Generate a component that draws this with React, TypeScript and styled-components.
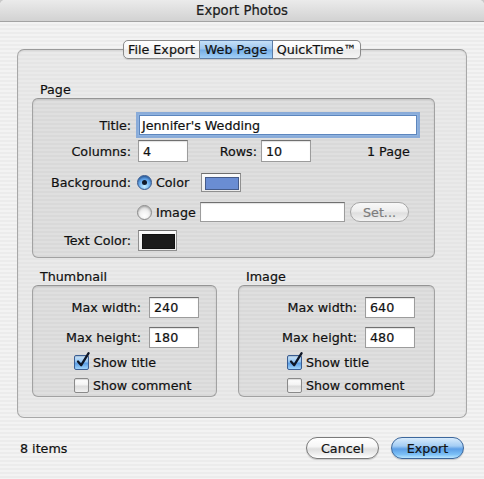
import React from "react";
import styled, { createGlobalStyle, css } from "styled-components";

const FONT = `"DejaVu Sans", "Lucida Grande", Verdana, sans-serif`;

const GlobalStyle = createGlobalStyle`
  html, body { margin: 0; padding: 0; background: #c9c9c9; }
  * { box-sizing: border-box; }
`;

const Window = styled.div`
  width: 484px;
  height: 479px;
  display: flex;
  flex-direction: column;
  font-family: ${FONT};
  font-size: 12.7px;
  color: #101010;
  -webkit-text-stroke: 0.2px #101010;
  border-radius: 5px 5px 0 0;
  overflow: hidden;
  background: repeating-linear-gradient(
    to bottom,
    #ececec 0px,
    #ececec 2px,
    #f3f3f3 2px,
    #f3f3f3 4px
  );
`;

const TitleBar = styled.div`
  height: 22px;
  flex: none;
  display: flex;
  align-items: center;
  justify-content: center;
  font-size: 13.2px;
  color: #1e1e1e;
  background: linear-gradient(to bottom, #ebebeb 0%, #dcdcdc 60%, #d2d2d2 100%);
  border-bottom: 1px solid #a3a3a3;
`;

const Main = styled.div`
  flex: none;
  padding: 18px 17px 0 17px;
  display: flex;
  flex-direction: column;
`;

const TabStrip = styled.div`
  display: flex;
  justify-content: center;
  position: relative;
  z-index: 1;
  height: 19px;
`;

const Tab = styled.div<{ $w: number; $active?: boolean; $first?: boolean; $last?: boolean }>`
  width: ${(p) => p.$w}px;
  height: 19px;
  display: flex;
  align-items: center;
  justify-content: center;
  border: 1px solid #8a8a8a;
  border-left-width: ${(p) => (p.$first ? 1 : 0)}px;
  border-radius: ${(p) => (p.$first ? "5px 0 0 5px" : p.$last ? "0 5px 5px 0" : "0")};
  background: linear-gradient(to bottom, #ffffff 0%, #f7f7f7 48%, #e9e9e9 52%, #f4f4f4 100%);
  box-shadow: 0 1px 1px rgba(0, 0, 0, 0.12);
  color: #121212;
  ${(p) =>
    p.$active &&
    css`
      background: linear-gradient(to bottom, #c6e0f7 0%, #9cc6ef 48%, #74ade6 52%, #a2d0f7 100%);
      border-color: #5f7fa8;
    `}
`;

const TabPanel = styled.div`
  margin-top: -10px;
  width: 450px;
  padding: 32px 31px 20px 14px;
  border: 1px solid #a8a8a8;
  border-top-color: #9a9a9a;
  border-radius: 7px;
  background: repeating-linear-gradient(
    to bottom,
    #e5e5e5 0px,
    #e5e5e5 2px,
    #eaeaea 2px,
    #eaeaea 4px
  );
  box-shadow: inset 0 1px 2px rgba(0, 0, 0, 0.08);
`;

const GroupLabel = styled.div<{ $mt?: number }>`
  height: 16px;
  line-height: 16px;
  padding-left: 8px;
  margin-top: ${(p) => p.$mt ?? 0}px;
`;

const Group = styled.div<{ $pt: number; $pb: number }>`
  border: 1px solid #a2a2a2;
  border-top-color: #959595;
  border-radius: 6px;
  padding: ${(p) => p.$pt}px 0 ${(p) => p.$pb}px 0;
  background: repeating-linear-gradient(
    to bottom,
    #d9d9d9 0px,
    #d9d9d9 2px,
    #dfdfdf 2px,
    #dfdfdf 4px
  );
  box-shadow: inset 0 1px 2px rgba(0, 0, 0, 0.1);
`;

const Row = styled.div<{ $mt?: number; $h?: number }>`
  display: flex;
  align-items: center;
  height: ${(p) => p.$h ?? 22}px;
  margin-top: ${(p) => p.$mt ?? 0}px;
`;

const FieldLabel = styled.div<{ $w: number; $mr?: number }>`
  width: ${(p) => p.$w}px;
  flex: none;
  text-align: right;
  margin-right: ${(p) => p.$mr ?? 7}px;
  white-space: nowrap;
`;

const TextField = styled.div<{ $w: number; $h?: number; $focus?: boolean; $ml?: number }>`
  width: ${(p) => p.$w}px;
  height: ${(p) => p.$h ?? 22}px;
  flex: none;
  margin-left: ${(p) => p.$ml ?? 0}px;
  display: flex;
  align-items: center;
  padding: 0 4px;
  background: #ffffff;
  border: 1px solid #9c9c9c;
  border-top-color: #707070;
  box-shadow: inset 0 1px 1px rgba(0, 0, 0, 0.12);
  white-space: nowrap;
  ${(p) =>
    p.$focus &&
    css`
      padding-left: 2px;
      border-color: #5d86bd;
      box-shadow: 0 0 0 1px #8fb3e0, 0 0 0 3px rgba(110, 155, 215, 0.75);
    `}
`;

const PageCount = styled.div`
  margin-left: 56px;
`;

const RadioOption = styled.div<{ $w: number }>`
  width: ${(p) => p.$w}px;
  flex: none;
  display: flex;
  align-items: center;
  gap: 4px;
  margin-left: -1px;
`;

const Radio = styled.span<{ $on?: boolean }>`
  width: 15px;
  height: 15px;
  flex: none;
  border-radius: 50%;
  position: relative;
  border: 1px solid #8a8a8a;
  -webkit-text-stroke: 0;
  background: radial-gradient(circle at 50% 75%, #ffffff 0%, #f2f2f2 40%, #cfcfcf 100%);
  box-shadow: inset 0 1px 2px rgba(0, 0, 0, 0.25);
  ${(p) =>
    p.$on &&
    css`
      border-color: #34558a;
      background: radial-gradient(circle at 50% 80%, #c5ecff 0%, #6fb2f2 45%, #2f6fc6 100%);
      box-shadow: inset 0 1px 2px rgba(0, 0, 0, 0.35);
      &::after {
        content: "";
        position: absolute;
        left: 4px;
        top: 4px;
        width: 5px;
        height: 5px;
        border-radius: 50%;
        background: #111a2a;
      }
    `}
`;

const ColorWell = styled.div<{ $w: number; $h: number; $color: string }>`
  width: ${(p) => p.$w}px;
  height: ${(p) => p.$h}px;
  flex: none;
  padding: 3px;
  border: 1px solid #8f8f8f;
  border-top-color: #6f6f6f;
  background: linear-gradient(to bottom, #fbfbfb, #ececec);
  &::before {
    content: "";
    display: block;
    width: 100%;
    height: 100%;
    background: ${(p) => p.$color};
    border: 1px solid rgba(0, 0, 0, 0.35);
  }
`;

const Spacer = styled.div<{ $w: number }>`
  width: ${(p) => p.$w}px;
  flex: none;
`;

const PillButton = styled.div<{ $w: number; $h: number; $kind?: "default" | "primary" | "disabled"; $ml?: number }>`
  width: ${(p) => p.$w}px;
  height: ${(p) => p.$h}px;
  flex: none;
  margin-left: ${(p) => p.$ml ?? 0}px;
  border-radius: ${(p) => p.$h / 2}px;
  display: flex;
  align-items: center;
  justify-content: center;
  border: 1px solid #7a7a7a;
  color: #141414;
  background: linear-gradient(
    to bottom,
    #ffffff 0%,
    #f6f6f6 42%,
    #dedede 55%,
    #eeeeee 80%,
    #ffffff 100%
  );
  box-shadow: 0 1px 1px rgba(0, 0, 0, 0.18);
  ${(p) =>
    p.$kind === "primary" &&
    css`
      border-color: #3c679c;
      background: linear-gradient(
        to bottom,
        #d8ebfc 0%,
        #a4cdf4 40%,
        #5d9fe6 55%,
        #7cc0f6 82%,
        #b9e6ff 100%
      );
    `}
  ${(p) =>
    p.$kind === "disabled" &&
    css`
      color: #7d7d7d;
      -webkit-text-stroke: 0.2px #7d7d7d;
      border-color: #a5a5a5;
      box-shadow: none;
      background: linear-gradient(
        to bottom,
        #f8f8f8 0%,
        #eeeeee 45%,
        #dfdfdf 55%,
        #e9e9e9 80%,
        #f3f3f3 100%
      );
    `}
`;

const SubGroups = styled.div`
  display: grid;
  grid-template-columns: 185px 197px;
  column-gap: 21px;
  margin-top: 11px;
`;

const CheckRow = styled.div<{ $ml: number; $mt: number }>`
  display: flex;
  align-items: center;
  gap: 4px;
  height: 16px;
  margin-top: ${(p) => p.$mt}px;
  margin-left: ${(p) => p.$ml}px;
`;

const CheckBoxBox = styled.span<{ $on?: boolean }>`
  width: 15px;
  height: 15px;
  flex: none;
  position: relative;
  border-radius: 2px;
  border: 1px solid #8a8a8a;
  -webkit-text-stroke: 0;
  background: linear-gradient(to bottom, #ffffff 0%, #f3f3f3 45%, #dcdcdc 55%, #f1f1f1 100%);
  box-shadow: inset 0 1px 1px rgba(0, 0, 0, 0.15);
  ${(p) =>
    p.$on &&
    css`
      border-color: #3a5d92;
      background: linear-gradient(to bottom, #cbe5fb 0%, #93c3f0 45%, #5a9de6 55%, #9fd3fa 100%);
    `}
  svg {
    position: absolute;
    left: 1px;
    top: -4px;
    overflow: visible;
  }
`;

const BottomBar = styled.div`
  flex: 1;
  display: flex;
  align-items: center;
  padding: 0 20px 1px 20px;
`;

const ItemsCount = styled.div`
  flex: 1;
`;

const CheckBox = ({ on }: { on?: boolean }) => (
  <CheckBoxBox $on={on}>
    {on && (
      <svg width="14" height="16" viewBox="0 0 14 16">
        <path
          d="M2 9.5 L5.2 13.2 L12.6 1.2"
          fill="none"
          stroke="#0e1626"
          strokeWidth="2.3"
          strokeLinecap="round"
          strokeLinejoin="round"
        />
      </svg>
    )}
  </CheckBoxBox>
);

type SizeGroupProps = {
  labelW: number;
  checkMl: number;
  width: string;
  height: string;
};

const SizeGroup = ({ labelW, checkMl, width, height }: SizeGroupProps) => (
  <Group $pt={11} $pb={3}>
    <Row $h={21}>
      <FieldLabel $w={labelW} $mr={8}>Max width:</FieldLabel>
      <TextField $w={50} $h={21}>{width}</TextField>
    </Row>
    <Row $h={21} $mt={9}>
      <FieldLabel $w={labelW} $mr={8}>Max height:</FieldLabel>
      <TextField $w={50} $h={21}>{height}</TextField>
    </Row>
    <CheckRow $ml={checkMl} $mt={6}>
      <CheckBox on />
      <span>Show title</span>
    </CheckRow>
    <CheckRow $ml={checkMl} $mt={7}>
      <CheckBox />
      <span>Show comment</span>
    </CheckRow>
  </Group>
);

export default function App() {
  return (
    <>
      <GlobalStyle />
      <Window>
        <TitleBar>Export Photos</TitleBar>
        <Main>
          <TabStrip>
            <Tab $w={77} $first>File Export</Tab>
            <Tab $w={73} $active>Web Page</Tab>
            <Tab $w={88} $last>QuickTime™</Tab>
          </TabStrip>
          <TabPanel>
            <GroupLabel>Page</GroupLabel>
            <Group $pt={15} $pb={6}>
              <Row>
                <FieldLabel $w={98}>Title:</FieldLabel>
                <TextField $w={278} $h={20} $ml={1} $focus>
                  Jennifer's Wedding
                </TextField>
              </Row>
              <Row $mt={4}>
                <FieldLabel $w={98}>Columns:</FieldLabel>
                <TextField $w={50}>4</TextField>
                <FieldLabel $w={69} $mr={4}>Rows:</FieldLabel>
                <TextField $w={50}>10</TextField>
                <PageCount>1 Page</PageCount>
              </Row>
              <Row $mt={9}>
                <FieldLabel $w={98}>Background:</FieldLabel>
                <RadioOption $w={64}>
                  <Radio $on />
                  <span>Color</span>
                </RadioOption>
                <ColorWell $w={40} $h={19} $color="#6a8dd3" />
              </Row>
              <Row $mt={8}>
                <Spacer $w={105} />
                <RadioOption $w={63}>
                  <Radio />
                  <span>Image</span>
                </RadioOption>
                <TextField $w={145} $h={20} />
                <PillButton $w={59} $h={20} $kind="disabled" $ml={5}>
                  Set...
                </PillButton>
              </Row>
              <Row $mt={6}>
                <FieldLabel $w={98}>Text Color:</FieldLabel>
                <ColorWell $w={39} $h={21} $color="#1b1b1b" />
              </Row>
            </Group>
            <SubGroups>
              <div>
                <GroupLabel>Thumbnail</GroupLabel>
                <SizeGroup labelW={108} checkMl={41} width="240" height="180" />
              </div>
              <div>
                <GroupLabel>Image</GroupLabel>
                <SizeGroup labelW={118} checkMl={48} width="640" height="480" />
              </div>
            </SubGroups>
          </TabPanel>
        </Main>
        <BottomBar>
          <ItemsCount>8 items</ItemsCount>
          <PillButton $w={73} $h={22}>Cancel</PillButton>
          <PillButton $w={73} $h={22} $kind="primary" $ml={12}>
            Export
          </PillButton>
        </BottomBar>
      </Window>
    </>
  );
}
